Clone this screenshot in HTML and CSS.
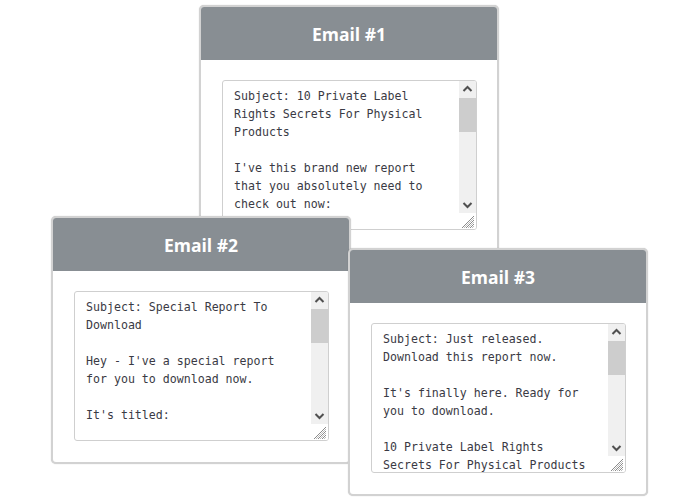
FILE: index.html
```html
<!DOCTYPE html>
<html>
<head>
<meta charset="utf-8">
<link rel="stylesheet" href="styles.css">
</head>
<body>
<div class="stage">
  <div class="card card-1">
    <div class="card-head">Email #1</div>
    <div class="card-body">
      <div class="ta">
        <div class="ta-text">Subject: 10 Private Label Rights Secrets For Physical Products

I've this brand new report that you absolutely need to check out now:

10 Private Label Rights Secrets For Physical Products</div>
        <div class="ta-side">
          <div class="sb-btn"><svg width="17" height="17" viewBox="0 0 17 17"><path d="M4.5 10 L8.5 6 L12.5 10" fill="none" stroke="#505050" stroke-width="2"/></svg></div>
          <div class="sb-track"><div class="sb-thumb"></div></div>
          <div class="sb-btn"><svg width="17" height="17" viewBox="0 0 17 17"><path d="M4.5 7 L8.5 11 L12.5 7" fill="none" stroke="#505050" stroke-width="2"/></svg></div>
          <div class="grip"><svg width="17" height="16" viewBox="0 0 17 16"><path d="M15 3 L3 15 M15 7 L7 15 M15 11 L11 15" stroke="#8a8a8a" stroke-width="1"/><path d="M15 5 L5 15 M15 9 L9 15 M15 13 L13 15" stroke="#bbbbbb" stroke-width="1"/></svg></div>
        </div>
      </div>
    </div>
  </div>

  <div class="card card-2">
    <div class="card-head">Email #2</div>
    <div class="card-body">
      <div class="ta">
        <div class="ta-text">Subject: Special Report To Download

Hey - I've a special report for you to download now.

It's titled:

10 Private Label Rights Secrets For Physical Products</div>
        <div class="ta-side">
          <div class="sb-btn"><svg width="17" height="17" viewBox="0 0 17 17"><path d="M4.5 10 L8.5 6 L12.5 10" fill="none" stroke="#505050" stroke-width="2"/></svg></div>
          <div class="sb-track"><div class="sb-thumb"></div></div>
          <div class="sb-btn"><svg width="17" height="17" viewBox="0 0 17 17"><path d="M4.5 7 L8.5 11 L12.5 7" fill="none" stroke="#505050" stroke-width="2"/></svg></div>
          <div class="grip"><svg width="17" height="16" viewBox="0 0 17 16"><path d="M15 3 L3 15 M15 7 L7 15 M15 11 L11 15" stroke="#8a8a8a" stroke-width="1"/><path d="M15 5 L5 15 M15 9 L9 15 M15 13 L13 15" stroke="#bbbbbb" stroke-width="1"/></svg></div>
        </div>
      </div>
    </div>
  </div>

  <div class="card card-3">
    <div class="card-head">Email #3</div>
    <div class="card-body">
      <div class="ta">
        <div class="ta-text">Subject: Just released. Download this report now.

It's finally here. Ready for you to download.

10 Private Label Rights Secrets For Physical Products

Grab it now.</div>
        <div class="ta-side">
          <div class="sb-btn"><svg width="17" height="17" viewBox="0 0 17 17"><path d="M4.5 10 L8.5 6 L12.5 10" fill="none" stroke="#505050" stroke-width="2"/></svg></div>
          <div class="sb-track"><div class="sb-thumb"></div></div>
          <div class="sb-btn"><svg width="17" height="17" viewBox="0 0 17 17"><path d="M4.5 7 L8.5 11 L12.5 7" fill="none" stroke="#505050" stroke-width="2"/></svg></div>
          <div class="grip"><svg width="17" height="16" viewBox="0 0 17 16"><path d="M15 3 L3 15 M15 7 L7 15 M15 11 L11 15" stroke="#8a8a8a" stroke-width="1"/><path d="M15 5 L5 15 M15 9 L9 15 M15 13 L13 15" stroke="#bbbbbb" stroke-width="1"/></svg></div>
        </div>
      </div>
    </div>
  </div>
</div>
</body>
</html>
```

FILE: styles.css
```css
html, body {
  margin: 0;
  padding: 0;
  background: #ffffff;
}

.stage {
  position: relative;
  width: 700px;
  height: 500px;
  overflow: hidden;
}

.card {
  position: absolute;
  width: 296px;
  border: 2px solid #d2d2d2;
  border-radius: 5px;
  background: #ffffff;
  box-shadow: 0 0 1px rgba(0, 0, 0, 0.25);
  display: flex;
  flex-direction: column;
}

.card-1 { left: 199px; top: 5px; z-index: 1; }
.card-2 { left: 51px; top: 216px; z-index: 2; }
.card-3 { left: 348px; top: 248px; z-index: 3; }

.card-head {
  height: 53px;
  background: #888e93;
  border-radius: 3px 3px 0 0;
  color: #ffffff;
  font-family: "Open Sans", "Noto Sans", sans-serif;
  font-weight: 700;
  font-size: 17.5px;
  display: flex;
  align-items: center;
  justify-content: center;
}

.card-body {
  padding: 20px 20px 21px 21px;
}

.ta {
  height: 148px;
  border: 1px solid #cfcfcf;
  border-radius: 3px;
  display: flex;
  overflow: hidden;
  background: #ffffff;
}

.ta-text {
  flex: 1;
  padding: 6px 11px 0 11px;
  overflow: hidden;
  white-space: pre-wrap;
  font-family: "DejaVu Sans Mono", "Liberation Mono", monospace;
  font-size: 11.6px;
  line-height: 18px;
  color: #3a3a44;
}

.ta-side {
  width: 17px;
  display: flex;
  flex-direction: column;
}

.sb-btn {
  height: 17px;
  background: #f0f0f0;
}

.sb-btn svg {
  display: block;
}

.sb-track {
  flex: 1;
  background: #f0f0f0;
}

.sb-thumb {
  height: 34px;
  background: #cdcdcd;
}

.grip {
  height: 16px;
  background: #ffffff;
}

.grip svg {
  display: block;
}
```
